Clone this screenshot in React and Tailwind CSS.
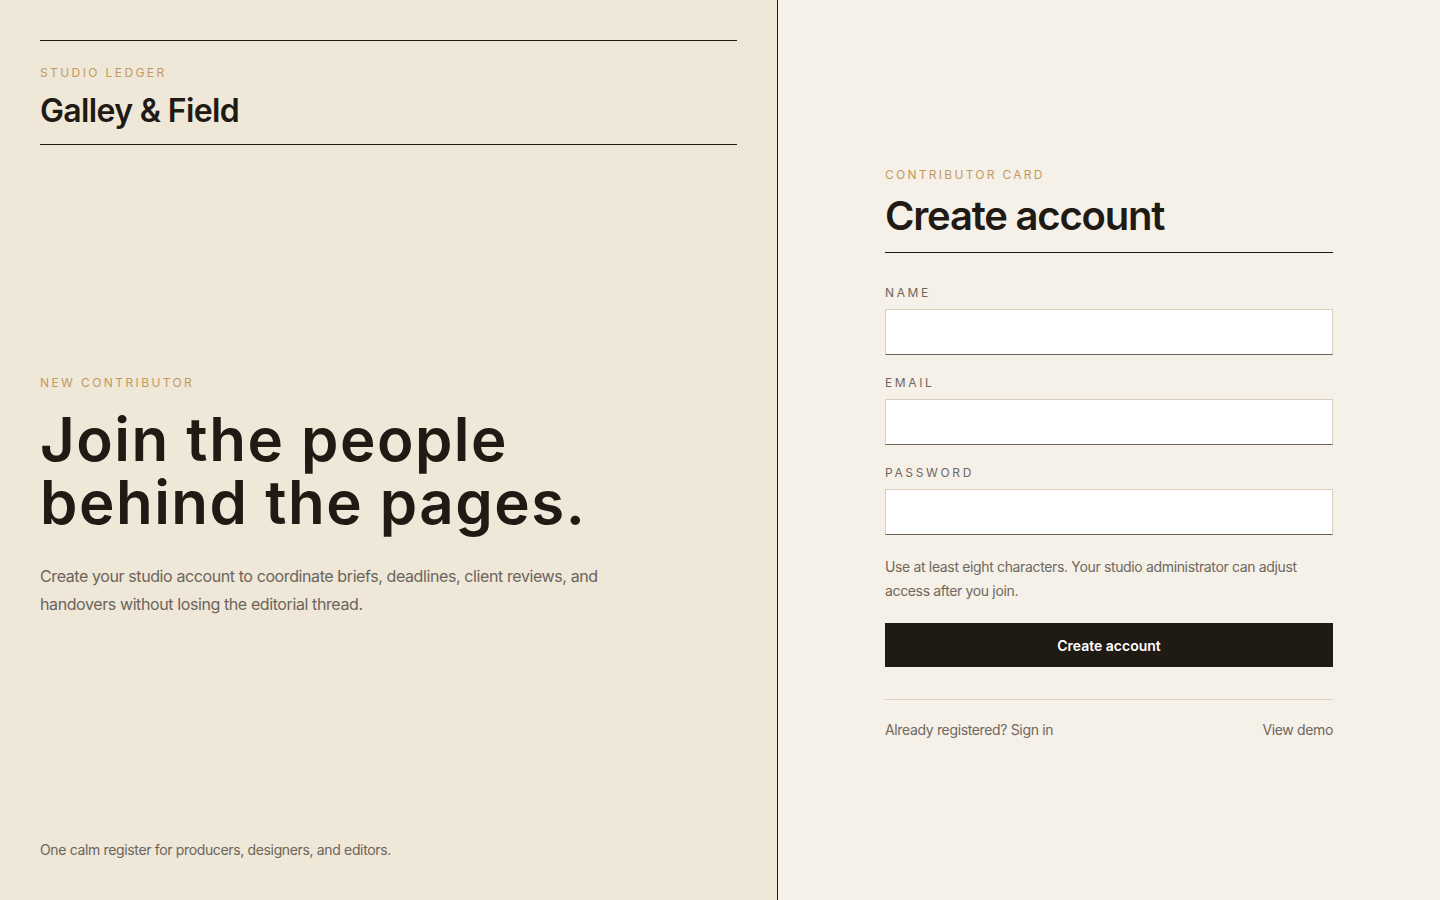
import React from 'react';

const Field = ({ label, type = 'text' }) => (
  <label className="flex flex-col">
    <span className="text-[12px] leading-4 tracking-[0.22em] uppercase text-[#6f685e]">{label}</span>
    <input
      type={type}
      className="mt-2 h-[46px] w-full bg-white border border-[#d9cfbf] border-b-[#6b6357] px-3 text-[15px] text-[#1f1a14] outline-none"
    />
  </label>
);

const App = () => {
  return (
    <div
      className="flex min-h-screen w-full text-[#1f1a14]"
      style={{ fontFamily: 'Inter, "Noto Sans", sans-serif' }}
    >
      <section className="flex h-screen w-[778px] shrink-0 flex-col justify-between border-r border-[#1f1a14] bg-[#efe7d8] p-10">
        <header className="border-y border-[#1f1a14] pt-6 pb-[13px]">
          <p className="text-[12px] leading-4 tracking-[0.2em] uppercase text-[#c29a5e]">Studio Ledger</p>
          <h1 className="mt-2.5 text-[32px] leading-10 font-semibold tracking-[-0.02em]">Galley &amp; Field</h1>
        </header>

        <div className="pt-2">
          <p className="text-[12px] leading-4 tracking-[0.2em] uppercase text-[#c29a5e]">New Contributor</p>
          <h2 className="mt-[17px] text-[60px] leading-[63px] font-semibold tracking-[0.025em]">
            Join the people
            <br />
            behind the pages.
          </h2>
          <p className="mt-7 max-w-[580px] text-[16px] leading-7 tracking-[-0.025em] text-[#6b655b]">
            Create your studio account to coordinate briefs, deadlines, client reviews, and handovers without losing the editorial thread.
          </p>
        </div>

        <p className="text-[14px] leading-5 tracking-[-0.025em] text-[#6b655b]">
          One calm register for producers, designers, and editors.
        </p>
      </section>

      <section className="flex flex-1 items-center justify-center bg-[#f5f0e8]">
        <div className="mt-[7px] w-[448px]">
          <p className="text-[12px] leading-4 tracking-[0.19em] uppercase text-[#c29a5e]">Contributor Card</p>
          <h2 className="mt-[9px] border-b border-[#1f1a14] pb-[12px] text-[40px] leading-[48px] font-semibold tracking-[-0.03em]">
            Create account
          </h2>

          <form className="mt-8 flex flex-col gap-5" onSubmit={(e) => e.preventDefault()}>
            <Field label="Name" />
            <Field label="Email" type="email" />
            <Field label="Password" type="password" />
          </form>

          <p className="mt-5 text-[14px] leading-6 tracking-[-0.025em] text-[#6f685e]">
            Use at least eight characters. Your studio administrator can adjust access after you join.
          </p>

          <button className="mt-5 h-11 w-full bg-[#1f1a14] text-[14px] font-semibold text-white">
            Create account
          </button>

          <div className="mt-8 flex items-center justify-between border-t border-[#ddd2c6] pt-5 text-[14px] leading-5 tracking-[-0.025em] text-[#6f685e]">
            <a href="#">Already registered? Sign in</a>
            <a href="#">View demo</a>
          </div>
        </div>
      </section>
    </div>
  );
};

export default App;
